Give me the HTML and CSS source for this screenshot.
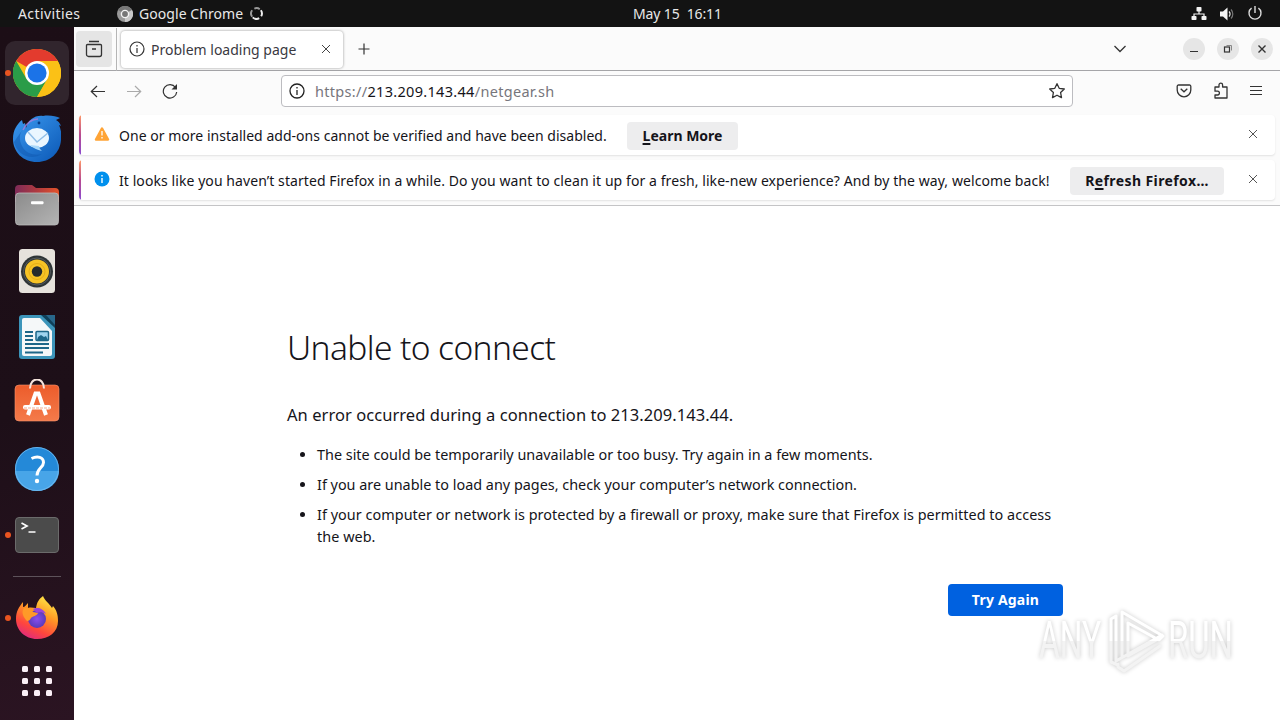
FILE: index.html
```html
<!DOCTYPE html>
<html lang="en">
<head>
<meta charset="utf-8">
<title>Problem loading page</title>
<link rel="stylesheet" href="styles.css">
</head>
<body>
<div class="desktop">
  <header class="topbar">
    <span class="activities">Activities</span>
    <div class="app-menu">
      <svg width="16" height="16" viewBox="0 0 16 16"><circle cx="8" cy="8" r="8" fill="#999"/><path d="M8 8 1 4A8 8 0 0 1 15 4Z" fill="#777"/><path d="M8 8 15 4A8 8 0 0 1 8 16Z" fill="#c8c8c8"/><circle cx="8" cy="8" r="3.6" fill="#777" stroke="#f4f4f4" stroke-width="1.4"/></svg>
      <span class="app-name">Google Chrome</span>
      <svg class="spinner" width="13" height="13" viewBox="0 0 12 12" fill="none" stroke-width="1.800"><path d="M2 9A5 5 0 0 1 2 3M4 1.500A5 5 0 0 1 9 2" stroke="#999"/><path d="M10 3A5 5 0 0 1 10.300 8.500M8.500 10.300A5 5 0 0 1 2.500 9.600" stroke="#eee"/></svg>
    </div>
    <span class="clock">May 15&nbsp; 16:11</span>
    <div class="tray">
      <svg width="16" height="16" viewBox="0 0 16 16" fill="#f4f4f4"><rect x="5.500" y="1" width="5" height="4.500" rx=".8"/><rect x=".5" y="10" width="5" height="4" rx=".8"/><rect x="10.500" y="10" width="5" height="4" rx=".8"/><path d="M8 5v3M3 11V8h10v3" fill="none" stroke="#f4f4f4" stroke-width="1.200"/></svg>
      <svg width="16" height="16" viewBox="0 0 16 16"><path d="M1 5.500h3L8.500 1.500v13L4 10.500H1Z" fill="#f4f4f4"/><path d="M10 5.500a3.500 3.500 0 0 1 0 5" fill="none" stroke="#eee" stroke-width="1.200"/><path d="M12 3.500a6.500 6.500 0 0 1 0 9" fill="none" stroke="#777" stroke-width="1.200"/></svg>
      <svg width="16" height="16" viewBox="0 0 16 16" fill="none" stroke="#ddd" stroke-width="1.400"><path d="M4.600 2.200a6 6 0 1 0 6.800 0M8 0v7"/></svg>
    </div>
  </header>

  <div class="workspace">
    <nav class="dock">
      <div class="dock-item active running">
        <svg width="48" height="48" viewBox="0 0 48 48"><circle cx="24" cy="24" r="24" fill="#fbc116"/><path d="M24 24 3.200 12A24 24 0 0 1 44.800 12Z" fill="#e33b2e"/><path d="M3.200 12A24 24 0 0 0 24 48L34.400 30 24 24 13.600 30Z" fill="#2a9c48"/><path d="M24 12H44.800A24 24 0 0 1 24 48L34.400 30Z" fill="#fbc116"/><circle cx="24" cy="24" r="12" fill="#fff"/><circle cx="24" cy="24" r="9.600" fill="#1b73e8"/></svg>
      </div>
      <div class="dock-item">
        <svg width="48" height="48" viewBox="0 0 48 48"><defs><linearGradient id="tb" x1="0" y1="0" x2="1" y2="1"><stop offset="0" stop-color="#3b9af0"/><stop offset="1" stop-color="#0b57b5"/></linearGradient></defs><path d="M0 24C0 15 4 9 9 5l1 4 2-1 1 5C15 5 22 0 30 1c6-1 13 0 17 2l-4 2c2 1 4 3 5 6l-2-1c2 5 3 9 2 15-1 13-11 22-24 22C10 47 0 37 0 24Z" fill="url(#tb)"/><path d="M10 14C6 19 6 25 9 31c4 8 13 10 20 8-11 7-25 1-28-12" fill="#1057b0" opacity=".5"/><ellipse cx="24" cy="23" rx="12" ry="10" fill="#eaf6ff"/><path d="m15 17 9 10 11-9" fill="none" stroke="#91bfe8" stroke-width="1.500"/><path d="M17 30c3 3 7 5 12 6-2-2-3-3-3-5Z" fill="#a8d8fa"/><path d="M10 15C14 7 19 4 25 4" fill="none" stroke="#a97ddb" stroke-width="1.500" opacity=".8"/><circle cx="26" cy="8" r="1.400" fill="#073c86"/></svg>
      </div>
      <div class="dock-item">
        <svg width="48" height="48" viewBox="0 0 48 48"><defs><linearGradient id="fo"><stop offset="0" stop-color="#7e2b58"/><stop offset=".5" stop-color="#b03a40"/><stop offset="1" stop-color="#e4532a"/></linearGradient><linearGradient id="fg" x1="0" y1="0" x2="1" y2="1"><stop offset="0" stop-color="#8b8b8b"/><stop offset="1" stop-color="#b4b4b4"/></linearGradient></defs><path d="M2 8a4 4 0 0 1 4-4h13l4 3h19a4 4 0 0 1 4 4v10H2Z" fill="url(#fo)"/><rect x="2.500" y="12" width="43" height="32" rx="3.500" fill="url(#fg)" stroke="#bbb" stroke-width=".8"/><rect x="18" y="20.300" width="12.500" height="3" rx="1" fill="#fff"/></svg>
      </div>
      <div class="dock-item">
        <svg width="48" height="48" viewBox="0 0 48 48"><rect x="6" y="2" width="36" height="44" rx="3.500" fill="#e6e2dc"/><circle cx="24" cy="24.500" r="16" fill="#2e3436"/><circle cx="24" cy="24.500" r="13.500" fill="none" stroke="#555b5d" stroke-width="1"/><circle cx="24" cy="24.500" r="12" fill="#f7c325"/><circle cx="24" cy="24.500" r="8" fill="none" stroke="#e5ae18" stroke-width="1"/><circle cx="24" cy="24.500" r="5.200" fill="#252a2c"/></svg>
      </div>
      <div class="dock-item">
        <svg width="48" height="48" viewBox="0 0 48 48"><path d="M9 2h24l9 11v30a3 3 0 0 1-3 3H9a3 3 0 0 1-3-3V5a3 3 0 0 1 3-3Z" fill="#3c95ba"/><path d="M28 2h14v13Z" fill="#0f4059"/><path d="M33 2h9v10Z" fill="#28678a"/><path d="M11 5h16l12 13v23a2 2 0 0 1-2 2H11a2 2 0 0 1-2-2V7a2 2 0 0 1 2-2Z" fill="#f5f8f9"/><g stroke="#1d6789" stroke-width="1.800"><path d="M12 19h8M12 23h8M12 27h8M12 31h24M12 35h24M12 39.500h18"/></g><rect x="23" y="18.500" width="12.500" height="9" rx="1" fill="#9fd4ef" stroke="#1d6789" stroke-width="1.500"/><path d="m24 27 1-3 3-2 3 2 2-1 2 4Z" fill="#1d6789"/></svg>
      </div>
      <div class="dock-item">
        <svg width="48" height="48" viewBox="0 0 48 48"><defs><linearGradient id="sw" x1="0" y1="0" x2="0" y2="1"><stop offset="0" stop-color="#ec5c2b"/><stop offset="1" stop-color="#f47a4a"/></linearGradient></defs><rect x="2" y="6" width="44" height="36" rx="4" fill="url(#sw)" stroke="#f69470" stroke-width=".6"/><path d="M17 9.500C17-2.500 31-2.500 31 9.500" fill="none" stroke="#f5e4dd" stroke-width="2"/><path d="M15 36 22.500 14.500h3L33 36" fill="none" stroke="#fff" stroke-width="4"/><rect x="10" y="26" width="28" height="4.500" rx="2" fill="#fff"/><path d="M11 29h26" stroke="#f28b66" stroke-width=".7" stroke-dasharray="3 1"/></svg>
      </div>
      <div class="dock-item">
        <svg width="48" height="48" viewBox="0 0 48 48"><circle cx="24" cy="24" r="22" fill="#2489d8"/><path d="M2 26a22 20 0 0 0 44 0Z" fill="#48a5e8"/><circle cx="24" cy="24" r="21.500" fill="none" stroke="#75bcf0" stroke-width=".8"/><path d="M18.500 13.500c6-3 12-1.500 12 4 0 5-6.500 6-6.500 13" fill="none" stroke="#fff" stroke-width="3"/><circle cx="24" cy="36" r="2.200" fill="#fff"/></svg>
      </div>
      <div class="dock-item running">
        <svg width="48" height="48" viewBox="0 0 48 48"><rect x="2.500" y="6.500" width="43" height="35" rx="3.500" fill="#4b4b4b" stroke="#6b6b6b"/><path d="m8.500 12 5.500 3-5.500 3M15.500 21h7" fill="none" stroke="#fff" stroke-width="1.700"/></svg>
      </div>
      <div class="dock-separator"></div>
      <div class="dock-item running">
        <svg width="48" height="48" viewBox="0 0 48 48"><defs><linearGradient id="ff" x1=".8" y1="0" x2=".3" y2="1"><stop offset="0" stop-color="#fff04a"/><stop offset=".4" stop-color="#ff9a25"/><stop offset=".75" stop-color="#ff463d"/><stop offset="1" stop-color="#e02a7f"/></linearGradient><radialGradient id="fp"><stop offset="0" stop-color="#8a4df0"/><stop offset="1" stop-color="#5a3bb8"/></radialGradient></defs><path d="M3 25c0-8 3-12 7-17v5c2 0 3-2 5-4v5c3-1 5 0 8 0 1-6 3-9 7-12 2 5 6 7 9 12l1-2c4 5 5 9 5 15 0 11-9 18-21 18S3 36 3 25Z" fill="url(#ff)"/><circle cx="24" cy="25" r="9" fill="url(#fp)"/><path d="M11 14c4-1 7 0 9 4l5 1c-1 3-5 3-7 5-1 2-2 3-4 3-4-4-6-9-3-13Z" fill="#ff9a28"/><path d="M20 15c4-2 10-1 13 5-3-2-7-2-9-1Z" fill="#9b45d9"/></svg>
      </div>
      <div class="apps-button">
        <svg width="48" height="48" viewBox="0 0 48 48" fill="#fbf0f7"><rect x="9" y="9" width="6" height="6" rx="1.500"/><rect x="21" y="9" width="6" height="6" rx="1.500"/><rect x="33" y="9" width="6" height="6" rx="1.500"/><rect x="9" y="21" width="6" height="6" rx="1.500"/><rect x="21" y="21" width="6" height="6" rx="1.500"/><rect x="33" y="21" width="6" height="6" rx="1.500"/><rect x="9" y="33" width="6" height="6" rx="1.500"/><rect x="21" y="33" width="6" height="6" rx="1.500"/><rect x="33" y="33" width="6" height="6" rx="1.500"/></svg>
      </div>
    </nav>

    <main class="browser">
      <div class="tabbar">
        <div class="view-button">
          <svg width="18" height="18" viewBox="0 0 18 18" fill="none" stroke="#333" stroke-width="1.300"><path d="M4 1.500h10M2.500 4.500h13a1 1 0 0 1 1 1v9a2 2 0 0 1-2 2h-11a2 2 0 0 1-2-2v-9a1 1 0 0 1 1-1ZM7 9h4"/></svg>
        </div>
        <div class="tab">
          <svg width="16" height="16" viewBox="0 0 16 16" fill="none" stroke="#333" stroke-width="1.200"><circle cx="8" cy="8" r="7"/><path d="M8 7v5M8 4v1.500"/></svg>
          <span class="tab-title">Problem loading page</span>
          <svg class="tab-close" width="10" height="10" viewBox="0 0 10 10" stroke="#444" stroke-width="1"><path d="m1 1 8 8M9 1 1 9"/></svg>
        </div>
        <svg class="new-tab" width="14" height="14" viewBox="0 0 14 14" stroke="#333" stroke-width="1.200"><path d="M7 1.500v11M1.500 7h11"/></svg>
        <svg class="tab-list" width="14" height="10" viewBox="0 0 14 10" fill="none" stroke="#333" stroke-width="1.300"><path d="m1.500 2 5.500 5.500L12.500 2"/></svg>
        <div class="window-controls">
          <span class="control"><svg width="12" height="12" viewBox="0 0 12 12" stroke="#333"><path d="M2 8.500h8"/></svg></span>
          <span class="control"><svg width="12" height="12" viewBox="0 0 12 12" fill="none" stroke="#333"><rect x="2.500" y="4" width="5" height="5" stroke-width="1.200"/><path d="M4.500 2.500h5v5" stroke="#888"/></svg></span>
          <span class="control"><svg width="12" height="12" viewBox="0 0 12 12" stroke="#333" stroke-width="1.400"><path d="m2.500 2.500 7 7M9.500 2.500l-7 7"/></svg></span>
        </div>
      </div>

      <div class="navbar">
        <div class="nav-buttons">
          <svg width="16" height="16" viewBox="0 0 16 16" fill="none" stroke="#333" stroke-width="1.200"><path d="M15 8.500H1.500M7 3 1.300 8.500 7 14"/></svg>
          <svg width="16" height="16" viewBox="0 0 16 16" fill="none" stroke="#aaa" stroke-width="1.200"><path d="M1 8.500h13.500M9 3l5.700 5.500L9 14"/></svg>
          <svg width="16" height="16" viewBox="0 0 16 16" fill="none" stroke="#333" stroke-width="1.200"><path d="M13.500 4.500A6.700 6.700 0 1 0 14.700 9"/><path d="M15 1v5.500H9.500Z" fill="#333" stroke="none"/></svg>
        </div>
        <div class="urlbar">
          <svg width="16" height="16" viewBox="0 0 16 16" fill="none" stroke="#222" stroke-width="1.300"><circle cx="8" cy="8" r="7"/><path d="M8 7v5M8 4v1.500"/></svg>
          <span class="url">https://<b>213.209.143.44</b>/netgear.sh</span>
          <svg class="star" width="18" height="18" viewBox="0 0 18 18" fill="none" stroke="#333" stroke-width="1.300" stroke-linejoin="round"><path d="m9 1.700 2.200 4.600 5.100.7-3.700 3.500.9 5.100L9 13.200l-4.500 2.400.9-5.100L1.700 7l5.100-.7Z"/></svg>
        </div>
        <div class="nav-tools">
          <svg width="16" height="16" viewBox="0 0 16 16" fill="none" stroke="#333" stroke-width="1.300"><path d="M2.500 2h11a1.300 1.300 0 0 1 1.300 1.300V7A6.800 6.800 0 0 1 1.200 7V3.300A1.300 1.300 0 0 1 2.500 2Z"/><path d="M4.700 5.700 8 8.800l3.300-3.100"/></svg>
          <svg width="16" height="18" viewBox="0 0 16 18" fill="none" stroke="#333" stroke-width="1.300" stroke-linejoin="round"><path d="M2 7.500V5h4V3a1.800 1.800 0 0 1 3.600 0v2H14v11H2v-3h2.500a1.900 1.900 0 0 0 0-3.800H2Z"/></svg>
          <svg width="14" height="12" viewBox="0 0 14 12" stroke="#333" stroke-width="1.200"><path d="M1 1.500h12M1 5.500h12M1 9.500h12"/></svg>
        </div>
      </div>

      <div class="notices">
        <div class="notice">
          <svg class="notice-icon" width="16" height="16" viewBox="0 0 16 16"><path d="M8 2.500 14 13.500H2Z" fill="#ffa436" stroke="#ffa436" stroke-width="2.500" stroke-linejoin="round"/><path d="M8 5v4.500M8 11v1.500" stroke="#fff" stroke-width="1.300"/></svg>
          <span class="notice-text first">One or more installed add-ons cannot be verified and have been disabled.</span>
          <button class="notice-button learn"><span><u>L</u>earn More</span></button>
          <svg class="notice-close" width="10" height="10" viewBox="0 0 10 10" stroke="#555"><path d="m1 1 8 8M9 1 1 9"/></svg>
        </div>
        <div class="notice">
          <svg class="notice-icon" width="16" height="16" viewBox="0 0 16 16"><circle cx="8" cy="8" r="7.500" fill="#0090ed"/><path d="M8 7v5M8 4v1.600" stroke="#fff" stroke-width="1.400"/></svg>
          <span class="notice-text second">It looks like you haven’t started Firefox in a while. Do you want to clean it up for a fresh, like-new experience? And by the way, welcome back!</span>
          <button class="notice-button refresh"><span>R<u>e</u>fresh Firefox…</span></button>
          <svg class="notice-close" width="10" height="10" viewBox="0 0 10 10" stroke="#555"><path d="m1 1 8 8M9 1 1 9"/></svg>
        </div>
      </div>

      <section class="page">
        <div class="error">
          <h1>Unable to connect</h1>
          <p class="summary">An error occurred during a connection to 213.209.143.44.</p>
          <ul>
            <li>The site could be temporarily unavailable or too busy. Try again in a few moments.</li>
            <li>If you are unable to load any pages, check your computer’s network connection.</li>
            <li class="long">If your computer or network is protected by a firewall or proxy, make sure that Firefox is permitted to access<br>the web.</li>
          </ul>
          <div class="actions"><button class="retry">Try Again</button></div>
        </div>
      </section>
    </main>
  </div>

  <svg class="watermark" width="240" height="76" viewBox="0 0 240 76">
    <defs>
      <linearGradient id="wm" gradientUnits="userSpaceOnUse" x1="0" y1="0" x2="0" y2="76"><stop offset=".48" stop-color="#fff"/><stop offset=".49" stop-color="#f3f3f3"/></linearGradient>
    </defs>
    <g fill="url(#wm)">
      <text x="7" y="54" textLength="62" lengthAdjust="spacingAndGlyphs">ANY</text>
      <text x="136" y="54" textLength="65" lengthAdjust="spacingAndGlyphs">RUN</text>
    </g>
    <g fill="none" stroke="url(#wm)" stroke-width="3" stroke-linejoin="round" stroke-linecap="round"><path d="M90 53V8l41 24-4 4-31-17v33l32-18M79 36V15l5-3v45l46-26M79 36v22l7 3M86 60v3l6 4 36-25"/></g>
  </svg>
</div>
</body>
</html>
```
FILE: styles.css
```css
* { box-sizing: border-box; }
body { margin: 0; font-family: "Noto Sans", "Open Sans", sans-serif; font-size: 14px; color: #15141a; }
svg { display: block; flex: none; }
button { font: inherit; border: 0; padding: 0; }
.desktop { position: relative; width: 1280px; height: 720px; display: flex; flex-direction: column; overflow: hidden; background: #fff; white-space: nowrap; }

.topbar { display: grid; grid-template-columns: 117px 516px 1fr auto; align-items: center; height: 27px; padding-right: 17px; background: #131313; color: #e8e8e8; }
.activities { padding-left: 18px; letter-spacing: .4px; }
.app-menu { display: flex; align-items: center; gap: 6px; }
.app-name { width: 105px; letter-spacing: .06px; }
.clock { letter-spacing: -.12px; }
.tray { display: flex; gap: 12px; }

.workspace { display: flex; flex: 1; min-height: 0; }
.dock { width: 74px; padding-top: 13px; display: flex; flex-direction: column; align-items: center; background: linear-gradient(165deg, #1c0e16 0%, #1d0f18 55%, #2b1422 100%); }
.dock-item { position: relative; width: 64px; height: 64px; margin: 1px 0; display: grid; place-items: center; border-radius: 10px; flex: none; }
.dock-item.active { background: #31252d; }
.dock-item.running::before { content: ""; position: absolute; left: 0; top: 29px; width: 6px; height: 6px; border-radius: 50%; background: #e95420; }
.dock-separator { width: 48px; height: 1px; margin: 8px 0; background: #5d525a; flex: none; }
.apps-button { height: 60px; display: grid; place-items: center; }

.browser { flex: 1; min-width: 0; display: flex; flex-direction: column; background: #fbfbfb; }
.tabbar { height: 44px; display: flex; align-items: center; padding: 1px 7px 0 2px; border-bottom: 1px solid #a5a5a8; }
.view-button { width: 36px; height: 36px; display: grid; place-items: center; border-radius: 4px; background: #e5e5e5; }
.tab { width: 222px; height: 37px; margin-left: 9px; padding: 0 12px 0 8px; display: flex; align-items: center; gap: 6px; background: #fff; border-radius: 4px; box-shadow: 0 0 3px rgba(0,0,0,.4); position: relative; }
.tab::before { content: ""; position: absolute; left: -5px; top: -3px; width: 1px; height: 43px; background: #b5b5b5; }
.tab-title { color: #3a393f; }
.tab-close { margin-left: auto; }
.new-tab { margin-left: 14px; }
.tab-list { margin-left: auto; }
.window-controls { display: flex; gap: 12px; margin-left: 56px; }
.control { width: 22px; height: 22px; border-radius: 50%; display: grid; place-items: center; background: #e6e6e6; }

.navbar { height: 40px; display: flex; align-items: center; padding: 0 17px 0 16px; }
.nav-buttons { display: flex; gap: 20px; width: 191px; }
.urlbar { width: 792px; height: 32px; display: flex; align-items: center; padding: 0 6px 0 7px; background: #fff; border: 1px solid #bcbcc0; border-radius: 4px; }
.url { margin-left: 10px; color: #77767c; font-size: 14.500px; letter-spacing: .31px; }
.url b { font-weight: 400; color: #15141a; }
.star { margin-left: auto; }
.nav-tools { flex: 1; display: flex; align-items: center; justify-content: flex-end; gap: 20.500px; }

.notices { height: 95px; padding: 4px 5px 0; border-bottom: 1px solid #c4c4c6; display: flex; flex-direction: column; gap: 5px; }
.notice { height: 40px; display: flex; align-items: center; padding: 0 17px 0 15px; background: #fff; border-radius: 4px; box-shadow: 0 1px 2px rgba(0,0,0,.1); position: relative; overflow: hidden; }
.notice::before { content: ""; position: absolute; left: 0; top: 0; width: 2px; height: 40px; background: linear-gradient(#ff9a6a, #b84a90 50%, #8a4bd0); }
.notice-icon { margin-top: -3px; }
.notice-text { margin-left: 9px; }
.notice-text.first { width: 488px; letter-spacing: .025px; }
.notice-text.second { width: 931px; letter-spacing: .077px; }
.notice-button { height: 28px; margin: 2px 0 0 20px; border-radius: 4px; background: #ededee; color: #15141a; font-weight: 700; }
.notice-button span { position: relative; top: -1px; }
.learn { width: 111px; }
.refresh { width: 154px; letter-spacing: .4px; }
.notice-button u { text-decoration-thickness: 2px; text-underline-offset: 2px; text-decoration-skip-ink: none; }
.notice-close { margin: -3px 0 0 auto; }

.page { flex: 1; background: #fff; padding: 116px 0 0 213px; }
.error { width: 776px; }
h1 { margin: 0; font-size: 33.500px; line-height: 50px; font-weight: 300; letter-spacing: -.6px; }
.summary { margin: 31px 0 0; font-size: 16.500px; line-height: 24px; letter-spacing: .05px; }
ul { margin: 17px 0 0; padding-left: 30px; font-size: 14.400px; }
li { line-height: 22px; margin-bottom: 8px; }
.long { letter-spacing: .045px; }
.actions { display: flex; justify-content: flex-end; margin-top: 36px; }
.retry { width: 115px; height: 32px; padding-bottom: 1px; border-radius: 4px; background: #0061e0; color: #fff; font-weight: 700; letter-spacing: .2px; }

.watermark { position: absolute; left: 1032px; top: 604px; filter: drop-shadow(0 0 2px rgba(0,0,0,.22)); }
.watermark text { font-family: Roboto, sans-serif; font-size: 51px; font-weight: 400; }
```
